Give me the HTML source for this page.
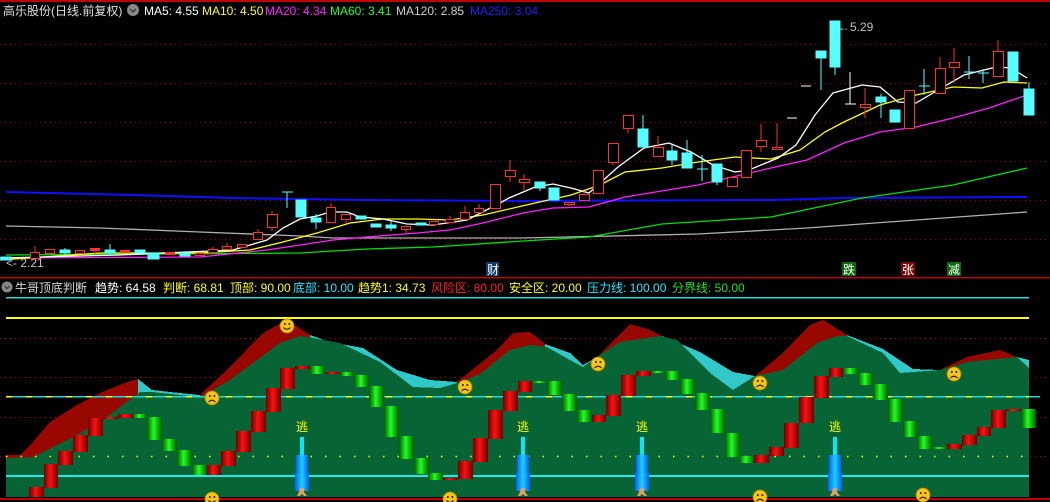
<!DOCTYPE html>
<html><head><meta charset="utf-8"><style>
html,body{margin:0;padding:0;background:#000;}
svg{display:block}
text{font-family:"Liberation Sans","Noto Sans CJK SC",sans-serif;font-size:12px}
</style></head><body>
<svg width="1050" height="502" viewBox="0 0 1050 502" xmlns="http://www.w3.org/2000/svg">
<defs>
<linearGradient id="gr" x1="0" x2="1" y1="0" y2="0"><stop offset="0" stop-color="#6a0000"/><stop offset="0.45" stop-color="#ff1010"/><stop offset="1" stop-color="#700000"/></linearGradient>
<linearGradient id="gg" x1="0" x2="1" y1="0" y2="0"><stop offset="0" stop-color="#005a00"/><stop offset="0.45" stop-color="#20ff20"/><stop offset="1" stop-color="#006000"/></linearGradient>
<linearGradient id="gb" x1="0" x2="1" y1="0" y2="0"><stop offset="0" stop-color="#0060ff"/><stop offset="0.5" stop-color="#20d0ff"/><stop offset="1" stop-color="#0060ff"/></linearGradient>
<g id="happy"><circle r="7" fill="#f5c518" stroke="#b08000" stroke-width="0.8"/><rect x="-3" y="-3" width="1.6" height="2" fill="#402000"/><rect x="1.6" y="-3" width="1.6" height="2" fill="#402000"/><path d="M-3.5 1.5 Q0 5 3.5 1.5" stroke="#402000" stroke-width="1.2" fill="none"/></g>
<g id="sad"><circle r="7" fill="#f5c518" stroke="#b08000" stroke-width="0.8"/><rect x="-3" y="-3" width="1.6" height="2" fill="#402000"/><rect x="1.6" y="-3" width="1.6" height="2" fill="#402000"/><path d="M-3.5 4 Q0 0.5 3.5 4" stroke="#402000" stroke-width="1.2" fill="none"/></g>
<g id="esc"><rect x="-2" y="22" width="4" height="20" fill="#00e8ff"/><rect x="-6" y="40" width="12" height="20" fill="url(#gb)"/><rect x="-7" y="58" width="14" height="18" fill="url(#gb)"/><path d="M-2 73 h4 v4 l3 4 h-3 l-2 -2 l-2 2 h-3 l2 -4z" fill="#e0a060"/><text x="0" y="16" fill="#ffff00" text-anchor="middle">逃</text></g>
</defs>

<!-- borders -->
<rect x="0" y="0" width="1050" height="2" fill="#c00000"/>
<rect x="0" y="277" width="1050" height="1.5" fill="#c00000"/>
<rect x="0" y="498" width="1050" height="2" fill="#c00000"/>

<!-- upper grid -->
<g stroke="#a00000" stroke-dasharray="1,4" stroke-width="1">
<line x1="0" y1="44.5" x2="1050" y2="44.5"/><line x1="0" y1="83.5" x2="1050" y2="83.5"/><line x1="0" y1="122.5" x2="1050" y2="122.5"/><line x1="0" y1="161.5" x2="1050" y2="161.5"/><line x1="0" y1="200.5" x2="1050" y2="200.5"/><line x1="0" y1="239.5" x2="1050" y2="239.5"/>
</g>

<!-- MAs -->
<g fill="none" stroke-width="1.3">
<polyline stroke="#1010ff" stroke-width="2" points="6,192 133,195 233,198 367,200 523,201 771,200 844,198 1027,197"/>
<polyline stroke="#b0b0b0" points="6,226 100,228 200,232 300,236 333,238 523,238 698,234 807,228 916,220 1027,212"/>
<polyline stroke="#00e000" points="6,255 300,253 367,249 433,247 523,241 589,237 662,224 771,217 862,198 953,185 1027,168"/>
<polyline stroke="#ff20ff" points="0,258 200,257 267,250 333,240 367,237 417,233 450,230 483,223 523,213 553,208 589,207 625,197 698,185 771,168 807,160 844,143 880,132 916,127 953,118 989,108 1027,95"/>
<polyline stroke="#ffff00" points="0,260 100,253 200,253 250,250 283,242 317,233 350,223 383,219 417,219 450,220 483,215 535,203 571,195 600,185 625,172 662,168 698,162 735,157 771,159 800,150 825,132 844,122 880,105 916,95 953,87 982,88 1004,82 1027,83"/>
<polyline stroke="#ffffff" points="0,258 120,255 233,250 267,240 283,228 300,219 317,216 330,212 347,212 360,217 383,219 407,224 433,225 467,220 500,203 509,198 535,187 553,184 571,188 589,193 618,167 644,148 669,143 691,152 713,165 735,172 749,170 778,158 796,145 815,115 833,93 862,85 880,87 898,102 916,103 938,90 964,75 996,67 1011,68 1027,78"/>
</g>

<!-- candles -->
<g stroke-width="1" shape-rendering="crispEdges">
<g fill="#55ffff" stroke="#55ffff">
<rect x="1" y="257" width="10" height="3"/>
<line x1="65" y1="248" x2="65" y2="255"/><rect x="60" y="250" width="10" height="3"/>
<line x1="110" y1="244" x2="110" y2="256"/><rect x="105" y="250" width="10" height="3"/>
<rect x="135" y="250" width="10" height="3"/>
<rect x="148" y="253" width="11" height="6"/>
<rect x="180" y="253" width="10" height="3"/>
<line x1="282" y1="192" x2="293" y2="192"/><line x1="287" y1="192" x2="287" y2="208"/>
<rect x="296" y="200" width="10" height="17"/>
<line x1="316" y1="214" x2="316" y2="229"/><rect x="311" y="218" width="10" height="4"/>
<rect x="356" y="216" width="10" height="3"/>
<rect x="371" y="224" width="10" height="3"/>
<line x1="391" y1="221" x2="391" y2="231"/><rect x="386" y="225" width="10" height="3"/>
<rect x="416" y="223" width="10" height="2"/>
<line x1="540" y1="182" x2="540" y2="191"/><rect x="535" y="182" width="10" height="6"/>
<rect x="549" y="188" width="10" height="12"/>
<line x1="643" y1="115" x2="643" y2="147"/><rect x="638" y="129" width="10" height="18"/>
<line x1="672" y1="145" x2="672" y2="165"/><rect x="667" y="151" width="10" height="9"/>
<line x1="687" y1="140" x2="687" y2="168"/><rect x="682" y="153" width="10" height="15"/>
<line x1="702" y1="155" x2="702" y2="181"/><line x1="697" y1="169" x2="708" y2="169"/>
<line x1="717" y1="164" x2="717" y2="185"/><rect x="712" y="164" width="10" height="18"/>
<line x1="821" y1="51" x2="821" y2="90"/><rect x="816" y="51" width="10" height="7"/>
<line x1="835" y1="21" x2="835" y2="75"/><rect x="830" y="21" width="10" height="46"/>
<line x1="881" y1="94" x2="881" y2="118"/><rect x="876" y="97" width="10" height="5"/>
<rect x="890" y="110" width="10" height="12"/>
<line x1="924" y1="69" x2="924" y2="95"/><line x1="919" y1="86" x2="930" y2="86"/>
<line x1="969" y1="56" x2="969" y2="79"/><line x1="964" y1="72" x2="975" y2="72"/>
<line x1="983" y1="69" x2="983" y2="83"/><line x1="978" y1="73" x2="989" y2="73"/>
<rect x="1008" y="52" width="10" height="29"/>
<line x1="1029" y1="82" x2="1029" y2="115"/><rect x="1024" y="89" width="10" height="26"/>
</g>
<g fill="#000" stroke="#ff3030">
<line x1="35" y1="246" x2="35" y2="252"/><rect x="30.5" y="252.5" width="9" height="6"/>
<rect x="45.5" y="249.5" width="9" height="4"/>
<rect x="75.5" y="250.5" width="9" height="3"/>
<line x1="95" y1="251" x2="95" y2="254"/><rect x="90.5" y="248.5" width="9" height="2" fill="#ff3030"/>
<rect x="120.5" y="250.5" width="9" height="2" fill="#ff3030"/>
<rect x="165.5" y="252.5" width="9" height="2" fill="#ff3030"/>
<rect x="195.5" y="253.5" width="9" height="2"/>
<line x1="213" y1="247" x2="213" y2="249"/><rect x="208.5" y="249.5" width="9" height="3"/>
<line x1="227" y1="243" x2="227" y2="246"/><rect x="222.5" y="246.5" width="9" height="3"/>
<rect x="237.5" y="244.5" width="9" height="3"/>
<line x1="258" y1="229" x2="258" y2="240"/><rect x="253.5" y="232.5" width="9" height="7"/>
<line x1="272" y1="211" x2="272" y2="231"/><rect x="267.5" y="214.5" width="10" height="13"/>
<line x1="331" y1="203" x2="331" y2="207"/><rect x="326.5" y="207.5" width="9" height="15"/>
<line x1="346" y1="219" x2="346" y2="224"/><rect x="341.5" y="214.5" width="9" height="5"/>
<line x1="406" y1="230" x2="406" y2="233"/><rect x="401.5" y="226.5" width="9" height="3"/>
<rect x="429.5" y="221.5" width="9" height="3"/>
<line x1="450" y1="216" x2="450" y2="219"/><rect x="445.5" y="219.5" width="9" height="3"/>
<line x1="465" y1="206" x2="465" y2="212"/><rect x="460.5" y="212.5" width="9" height="7"/>
<line x1="479" y1="204" x2="479" y2="208"/><rect x="474.5" y="208.5" width="9" height="4"/>
<rect x="490.5" y="184.5" width="10" height="24"/>
<line x1="510" y1="160" x2="510" y2="182"/><rect x="505.5" y="170.5" width="10" height="6"/>
<line x1="524" y1="174" x2="524" y2="190"/><rect x="519.5" y="179.5" width="10" height="3"/>
<line x1="569" y1="204" x2="569" y2="206"/><rect x="564.5" y="202.5" width="10" height="2"/>
<line x1="584" y1="191" x2="584" y2="194"/><rect x="579.5" y="194.5" width="10" height="6"/>
<rect x="593.5" y="170.5" width="10" height="23"/>
<line x1="613" y1="162" x2="613" y2="165"/><rect x="608.5" y="143.5" width="10" height="19"/>
<line x1="628" y1="128" x2="628" y2="133"/><rect x="623.5" y="115.5" width="10" height="13"/>
<line x1="658" y1="136" x2="658" y2="147"/><rect x="653.5" y="147.5" width="10" height="9"/>
<rect x="727.5" y="177.5" width="10" height="9"/>
<rect x="741.5" y="150.5" width="10" height="27"/>
<line x1="761" y1="124" x2="761" y2="152"/><rect x="756.5" y="140.5" width="10" height="6"/>
<line x1="777" y1="123" x2="777" y2="150"/><rect x="772.5" y="147.5" width="10" height="2"/>
<line x1="865" y1="88" x2="865" y2="118"/><rect x="860.5" y="104.5" width="10" height="3"/>
<rect x="904.5" y="90.5" width="10" height="38"/>
<line x1="940" y1="57" x2="940" y2="68"/><rect x="935.5" y="68.5" width="10" height="25"/>
<line x1="954" y1="48" x2="954" y2="83"/><rect x="949.5" y="62.5" width="10" height="5"/>
<line x1="998" y1="40" x2="998" y2="51"/><rect x="993.5" y="51.5" width="10" height="25"/>
</g>
<g stroke="#ffffff">
<line x1="787" y1="118" x2="797" y2="118"/><line x1="801" y1="86" x2="811" y2="86"/>
<line x1="850" y1="72" x2="850" y2="104"/><line x1="845" y1="104" x2="856" y2="104"/>
</g>
</g>
<text x="838" y="31" fill="#c0c0c0">←5.29</text>
<text x="6" y="267" fill="#c0c0c0">&lt;- 2.21</text>

<rect x="486" y="262" width="13" height="14" fill="#123a6a"/><text x="487" y="274" fill="#fff">财</text>
<rect x="842" y="262" width="14" height="14" fill="#0a6a0a"/><text x="843" y="274" fill="#fff">跌</text>
<rect x="901" y="262" width="14" height="14" fill="#7a0a0a"/><text x="902" y="274" fill="#fff">张</text>
<rect x="947" y="262" width="14" height="14" fill="#0a6a0a"/><text x="948" y="274" fill="#fff">减</text>

<!-- headers -->
<text x="3" y="15" fill="#e0e0e0">高乐股份(日线.前复权)</text>
<circle cx="133" cy="10" r="6" fill="#888"/><path d="M130 9 l3 3 l3 -3" stroke="#333" stroke-width="1.3" fill="none"/>
<text x="144" y="15" fill="#ffffff">MA5: 4.55</text>
<text x="202" y="15" fill="#ffff00">MA10: 4.50</text>
<text x="265" y="15" fill="#ff20ff">MA20: 4.34</text>
<text x="330" y="15" fill="#20ff20">MA60: 3.41</text>
<text x="396" y="15" fill="#d0d0d0">MA120: 2.85</text>
<text x="470" y="15" fill="#2020ff">MA250: 3.04</text>

<circle cx="7" cy="287" r="5.5" fill="#888"/><path d="M4.5 286 l2.5 2.5 l2.5 -2.5" stroke="#333" stroke-width="1.2" fill="none"/>
<text x="15" y="292" fill="#d8d8d8">牛哥顶底判断</text>
<text x="95" y="292" fill="#ffffff">趋势: 64.58</text>
<text x="163" y="292" fill="#ffff00">判断: 68.81</text>
<text x="230" y="292" fill="#ffff00">顶部: 90.00</text>
<text x="293" y="292" fill="#20e8ff">底部: 10.00</text>
<text x="358" y="292" fill="#ffff00">趋势1: 34.73</text>
<text x="431" y="292" fill="#ff2020">风险区: 80.00</text>
<text x="509" y="292" fill="#ffff00">安全区: 20.00</text>
<text x="587" y="292" fill="#20e8ff">压力线: 100.00</text>
<text x="672" y="292" fill="#20e020">分界线: 50.00</text>

<!-- lower lines -->
<rect x="6" y="297" width="1023" height="1.5" fill="#20e0e0"/>
<rect x="6" y="317" width="1023" height="2" fill="#ffff00"/>
<g stroke="#c00000" stroke-dasharray="1,4"><line x1="0" y1="338.5" x2="1050" y2="338.5"/><line x1="0" y1="377.5" x2="1050" y2="377.5"/><line x1="0" y1="417.5" x2="1050" y2="417.5"/><line x1="0" y1="456.5" x2="1050" y2="456.5"/></g>

<!-- area fills -->
<g shape-rendering="crispEdges">
<polygon fill="#990800" points="6,497 6,455 20,455 33,442 50,422 77,405 100,393 127,382 138,379 152,390 138,497"/>
<polygon fill="#30c8c8" points="138,497 138,379 152,390 170,392 200,395 200,497"/>
<polygon fill="#990800" points="200,497 200,395 230,367 263,333 287,320 310,335 310,497"/>
<polygon fill="#30c8c8" points="310,497 310,335 330,342 363,348 397,370 430,380 457,382 457,497"/>
<polygon fill="#990800" points="457,497 457,382 497,350 513,333 530,332 545,344 545,497"/>
<polygon fill="#30c8c8" points="545,497 545,344 570,353 583,365 597,357 597,497"/>
<polygon fill="#990800" points="597,497 597,357 630,324 650,330 662,336 662,497"/>
<polygon fill="#30c8c8" points="662,497 662,336 700,352 733,372 755,376 755,497"/>
<polygon fill="#990800" points="755,497 755,376 783,353 810,325 823,320 847,335 847,497"/>
<polygon fill="#30c8c8" points="847,497 847,335 883,349 913,369 940,370 940,497"/>
<polygon fill="#990800" points="940,497 940,370 967,357 1000,350 1017,357 1017,497"/>
<polygon fill="#30c8c8" points="1017,497 1017,357 1029,360 1029,497"/>
<polygon fill="#076535" points="6,497 6,458 33,457 67,440 100,422 140,392 152,392 200,397 230,380 280,343 300,336 313,338 340,343 380,362 413,387 440,388 457,383 480,374 510,350 530,345 547,347 570,360 583,367 597,357 620,342 660,336 677,340 710,373 733,390 755,376 783,370 817,343 837,336 847,336 883,353 900,373 940,370 967,362 1017,357 1029,368 1029,497"/>
</g>
<rect x="6" y="396" width="1034" height="1.5" fill="#20d8d8"/>
<line x1="6" y1="396.8" x2="1029" y2="396.8" stroke="#ffff00" stroke-width="1.5" stroke-dasharray="6,14"/>
<line x1="6" y1="456.5" x2="1029" y2="456.5" stroke="#ffff00" stroke-width="1.5" stroke-dasharray="1.5,13"/>
<rect x="6" y="475" width="1023" height="2" fill="#20e8e8"/>

<!-- bars -->
<g shape-rendering="crispEdges">
<g fill="url(#gr)">
<rect x="29" y="487" width="15" height="10"/><rect x="44" y="464" width="14" height="24"/><rect x="58" y="451" width="15" height="14"/><rect x="73" y="435" width="15" height="17"/><rect x="88" y="418" width="15" height="18"/><rect x="103" y="417" width="15" height="2"/><rect x="118" y="414" width="15" height="4"/>
<rect x="207" y="465" width="14" height="10"/><rect x="221" y="451" width="15" height="15"/><rect x="236" y="431" width="15" height="21"/><rect x="251" y="411" width="15" height="21"/><rect x="266" y="388" width="15" height="24"/><rect x="280" y="368" width="15" height="21"/><rect x="295" y="366" width="15" height="3"/><rect x="325" y="372" width="15" height="2"/>
<rect x="443" y="478" width="15" height="2"/><rect x="458" y="461" width="15" height="18"/><rect x="473" y="438" width="15" height="24"/><rect x="488" y="410" width="15" height="29"/><rect x="503" y="391" width="15" height="20"/><rect x="518" y="381" width="14" height="11"/>
<rect x="592" y="415" width="14" height="7"/><rect x="606" y="395" width="15" height="21"/><rect x="621" y="375" width="15" height="21"/><rect x="636" y="371" width="15" height="5"/>
<rect x="754" y="455" width="15" height="8"/><rect x="769" y="447" width="15" height="9"/><rect x="784" y="423" width="15" height="25"/><rect x="799" y="397" width="15" height="26"/><rect x="814" y="376" width="15" height="22"/><rect x="829" y="368" width="14" height="9"/>
<rect x="947" y="444" width="15" height="5"/><rect x="962" y="435" width="15" height="10"/><rect x="977" y="427" width="14" height="9"/><rect x="991" y="410" width="15" height="18"/><rect x="1006" y="409" width="15" height="2"/>
</g>
<g fill="url(#gg)">
<rect x="133" y="414" width="14" height="4"/><rect x="147" y="417" width="15" height="23"/><rect x="162" y="439" width="15" height="12"/><rect x="177" y="450" width="15" height="16"/><rect x="192" y="465" width="15" height="10"/>
<rect x="310" y="366" width="15" height="8"/><rect x="340" y="372" width="14" height="4"/><rect x="354" y="375" width="15" height="12"/><rect x="369" y="386" width="15" height="21"/><rect x="384" y="406" width="15" height="31"/><rect x="399" y="436" width="15" height="23"/><rect x="414" y="458" width="15" height="16"/><rect x="428" y="473" width="15" height="7"/>
<rect x="532" y="381" width="15" height="2"/><rect x="547" y="381" width="15" height="14"/><rect x="562" y="394" width="15" height="17"/><rect x="577" y="410" width="15" height="12"/>
<rect x="651" y="371" width="14" height="2"/><rect x="665" y="371" width="15" height="9"/><rect x="680" y="379" width="15" height="15"/><rect x="695" y="393" width="15" height="17"/><rect x="710" y="409" width="15" height="24"/><rect x="725" y="433" width="15" height="24"/><rect x="739" y="456" width="15" height="7"/>
<rect x="843" y="368" width="15" height="6"/><rect x="858" y="373" width="15" height="12"/><rect x="873" y="384" width="15" height="16"/><rect x="888" y="399" width="15" height="23"/><rect x="903" y="421" width="14" height="16"/><rect x="917" y="436" width="15" height="13"/><rect x="932" y="447" width="15" height="2"/>
<rect x="1021" y="409" width="15" height="19"/>
</g>
</g>

<!-- escape markers -->
<use href="#esc" x="302" y="415"/>
<use href="#esc" x="523" y="415"/>
<use href="#esc" x="642" y="415"/>
<use href="#esc" x="835" y="415"/>

<!-- faces -->
<use href="#happy" x="287" y="326"/>
<use href="#sad" x="212" y="398"/>
<use href="#sad" x="465" y="387"/>
<use href="#sad" x="598" y="364"/>
<use href="#sad" x="760" y="383"/>
<use href="#sad" x="954" y="374"/>
<use href="#happy" x="212" y="499"/>
<use href="#happy" x="450" y="499"/>
<use href="#sad" x="760" y="497"/>
<use href="#sad" x="923" y="495"/>
</svg>
</body></html>
